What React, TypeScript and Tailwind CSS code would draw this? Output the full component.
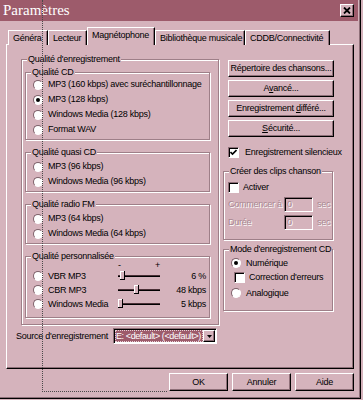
import type React from "react"
import clsx from "clsx"

const face = "bg-[#d5b3bc]"
const raised =
  "border border-t-white border-l-white border-r-black border-b-black shadow-[inset_-1px_-1px_0_#8e6f78]"
const sunken =
  "border border-t-[#8e6f78] border-l-[#8e6f78] border-r-white border-b-white shadow-[inset_1px_1px_0_#000]"
const disabled = "text-[#a98891] [text-shadow:1px_1px_0_#fff]"

const Group = ({ label, className, children }: { label: string; className?: string; children: React.ReactNode }) => (
  <div className={clsx("relative border border-[#9e7f88] shadow-[1px_1px_0_#fff,inset_1px_1px_0_#fff]", className)}>
    <span className={clsx("absolute -top-[6px] left-[5px] px-[1px] leading-[11px]", face)}>{label}</span>
    {children}
  </div>
)

const Radio = ({ on }: { on?: boolean }) => (
  <span className="flex h-[10px] w-[10px] shrink-0 items-center justify-center rounded-full border border-t-[#7d6069] border-l-[#7d6069] border-r-white border-b-white bg-white">
    {on && <span className="h-[4px] w-[4px] rounded-full bg-black" />}
  </span>
)

const Check = ({ on }: { on?: boolean }) => (
  <span className={clsx("flex h-[11px] w-[11px] shrink-0 items-center justify-center bg-white", sunken)}>
    {on && (
      <svg width="7" height="7" viewBox="0 0 7 7">
        <path d="M0.5 3 L2.5 5 L6.5 1" stroke="#000" strokeWidth="1.6" fill="none" />
      </svg>
    )}
  </span>
)

const RadioRow = ({ label, on, h = "h-[15px]" }: { label: string; on?: boolean; h?: string }) => (
  <div className={clsx("flex items-center gap-[5px]", h)}>
    <Radio on={on} />
    <span>{label}</span>
  </div>
)

const Btn = ({ children, className }: { children: React.ReactNode; className?: string }) => (
  <div className={clsx("flex items-center justify-center", face, raised, className)}>{children}</div>
)

const Slider = ({ pos }: { pos: number }) => (
  <svg width="42" height="14" viewBox="0 0 42 14" className="shrink-0">
    <rect x="0" y="6" width="42" height="1" fill="#4a3036" />
    <rect x="0" y="7" width="42" height="1" fill="#000" />
    <rect x={pos} y="2" width="5" height="9" fill="#d5b3bc" />
    <rect x={pos} y="2" width="1" height="9" fill="#fff" />
    <rect x={pos} y="2" width="4" height="1" fill="#fff" />
    <rect x={pos + 4} y="2" width="1" height="9" fill="#000" />
    <rect x={pos} y="10" width="5" height="1" fill="#000" />
  </svg>
)

const PersoRow = ({ label, pos, value }: { label: string; pos: number; value: string }) => (
  <div className="flex h-[14px] items-center">
    <Radio />
    <span className="ml-[5px] w-[70px]">{label}</span>
    <Slider pos={pos} />
    <span className="w-[46px] text-right">{value}</span>
  </div>
)

const tabs = [
  { label: "Généra", w: "w-[40px]" },
  { label: "Lecteur", w: "w-[39px]" },
  { label: "Magnétophone", w: "w-[68px]", active: true },
  { label: "Bibliothèque musicale", w: "w-[90px]" },
  { label: "CDDB/Connectivité", w: "w-[85px]" },
]

export default function App() {
  return (
    <div className={clsx("relative h-[400px] w-[363px] overflow-hidden whitespace-nowrap font-['Liberation_Sans',Arial,sans-serif] text-[9px] leading-[11px] tracking-[-0.25px] text-black", face)}>
      <div className="flex h-[399px] w-[361px] flex-col border-r border-b border-black shadow-[inset_-1px_-1px_0_#8e6f78]">
        {/* title bar */}
        <div className="mr-[2px] flex h-[21px] items-center justify-between bg-[#9d5b6b] pl-[3px] pr-[4px]">
          <span className="font-['Liberation_Serif',serif] text-[15px] leading-[21px] tracking-normal text-white">Paramètres</span>
          <Btn className="h-[13px] w-[14px]">
            <svg width="8" height="7" viewBox="0 0 8 7">
              <path d="M1 0.5 L7 6.5 M7 0.5 L1 6.5" stroke="#000" strokeWidth="1.8" />
            </svg>
          </Btn>
        </div>

        {/* tabs */}
        <div className="relative z-10 mt-[6px] mb-[-1px] ml-[8px] flex h-[18px] items-end">
          {tabs.map((t) => (
            <div
              key={t.label}
              className={clsx(
                "flex items-center overflow-hidden border-t border-l border-t-white border-l-white border-r border-r-black pl-[4px] shadow-[inset_-1px_0_0_#8e6f78]",
                face,
                t.w,
                t.active ? "h-[18px] pb-[2px]" : "h-[15px]"
              )}
            >
              {t.label}
            </div>
          ))}
        </div>

        {/* panel */}
        <div className={clsx("ml-[6px] flex h-[325px] w-[348px] flex-col border border-t-white border-l-white border-r-black border-b-black shadow-[inset_-1px_-1px_0_#8e6f78]", face)}>
          <div className="flex items-start">
            {/* left column */}
            <Group label="Qualité d'enregistrement" className="mt-[14px] ml-[14px] w-[198px] pt-[12px] pb-[6px]">
              <div className="ml-[3px] flex w-[185px] flex-col">
                <Group label="Qualité CD" className="pt-[4px] pb-[2px] pl-[7px]">
                  <RadioRow label="MP3 (160 kbps) avec suréchantillonnage" />
                  <RadioRow label="MP3 (128 kbps)" on />
                  <RadioRow label="Windows Media (128 kbps)" />
                  <RadioRow label="Format WAV" />
                </Group>
                <Group label="Qualité quasi CD" className="mt-[12px] pt-[6px] pb-[2px] pl-[7px]">
                  <RadioRow label="MP3 (96 kbps)" />
                  <RadioRow label="Windows Media (96 kbps)" />
                </Group>
                <Group label="Qualité radio FM" className="mt-[12px] pt-[6px] pb-[2px] pl-[7px]">
                  <RadioRow label="MP3 (64 kbps)" />
                  <RadioRow label="Windows Media (64 kbps)" />
                </Group>
                <Group label="Qualité personnalisée" className="mt-[12px] pt-[4px] pb-[6px] pl-[7px]">
                  <div className="ml-[85px] flex h-[8px] w-[42px] items-center justify-between leading-[8px]">
                    <span>-</span>
                    <span>+</span>
                  </div>
                  <PersoRow label="VBR MP3" pos={2} value="6 %" />
                  <PersoRow label="CBR MP3" pos={16} value="48 kbps" />
                  <PersoRow label="Windows Media" pos={0} value="5 kbps" />
                </Group>
              </div>
            </Group>

            {/* right column */}
            <div className="mt-[15px] ml-[4px] flex w-[110px] flex-col">
              <div className="ml-[5px] flex w-[106px] flex-col gap-[3px]">
                <Btn className="h-[17px]">Répertoire des chansons...</Btn>
                <Btn className="h-[17px]">
                  <span>
                    A<u>v</u>ancé...
                  </span>
                </Btn>
                <Btn className="h-[17px]">
                  <span>
                    Enregistrement <u>d</u>ifféré...
                  </span>
                </Btn>
                <Btn className="h-[17px]">
                  <span>
                    <u>S</u>écurité...
                  </span>
                </Btn>
              </div>
              <div className="mt-[8px] ml-[5px] flex h-[14px] items-center gap-[6px]">
                <Check on />
                <span>Enregistrement silencieux</span>
              </div>
              <Group label="Créer des clips chanson" className="mt-[12px] pt-[8px] pb-[9px] pl-[4px]">
                <div className="flex h-[14px] items-center gap-[4px]">
                  <Check />
                  <span>Activer</span>
                </div>
                <div className="mt-[3px] flex h-[15px] items-center">
                  <span className={clsx("w-[56px]", disabled)}>Commencer à</span>
                  <span className={clsx("flex h-[15px] w-[29px] items-center pl-[2px]", sunken, disabled)}>0</span>
                  <span className={clsx("ml-[4px]", disabled)}>sec</span>
                </div>
                <div className="mt-[3px] flex h-[15px] items-center">
                  <span className={clsx("w-[56px]", disabled)}>Durée</span>
                  <span className={clsx("flex h-[15px] w-[29px] items-center pl-[2px]", sunken, disabled)}>0</span>
                  <span className={clsx("ml-[4px]", disabled)}>sec</span>
                </div>
              </Group>
              <Group label="Mode d'enregistrement CD" className="mt-[9px] pt-[6px] pb-[10px] pl-[7px]">
                <RadioRow label="Numérique" on h="h-[14px]" />
                <div className="flex h-[14px] items-center gap-[4px] pl-[3px]">
                  <Check />
                  <span>Correction d'erreurs</span>
                </div>
                <div className="mt-[2px]">
                  <RadioRow label="Analogique" h="h-[14px]" />
                </div>
              </Group>
            </div>
          </div>

          {/* source */}
          <div className="mt-[3px] flex items-center pl-[9px]">
            <span className="w-[97px]">Source d'enregistrement</span>
            <div className={clsx("flex h-[16px] w-[104px] items-stretch bg-white p-[1px]", sunken)}>
              <span className="flex min-w-0 flex-1 items-center overflow-hidden bg-[#9d5b6b] pl-[1px] tracking-[-0.4px] text-white outline-1 outline-dotted outline-offset-[-1px] outline-[#e8d0d6]">
                E: &lt;default&gt; (&lt;default&gt;)
              </span>
              <Btn className="w-[12px] shrink-0">
                <svg width="5" height="3" viewBox="0 0 5 3">
                  <path d="M0 0 H5 L2.5 3 Z" fill="#000" />
                </svg>
              </Btn>
            </div>
          </div>
        </div>

        {/* dialog buttons */}
        <div className="mt-[4px] flex justify-end gap-[4px] pr-[6px]">
          <Btn className="h-[18px] w-[59px]">OK</Btn>
          <Btn className="h-[18px] w-[59px]">Annuler</Btn>
          <Btn className="h-[18px] w-[59px]">Aide</Btn>
        </div>
      </div>

      {/* dotted drag outline */}
      <div className="pointer-events-none absolute top-0 left-[42px] z-20 h-[392px] w-[125px] border-b border-l border-dotted border-[#4a4a4a]" />
    </div>
  )
}
